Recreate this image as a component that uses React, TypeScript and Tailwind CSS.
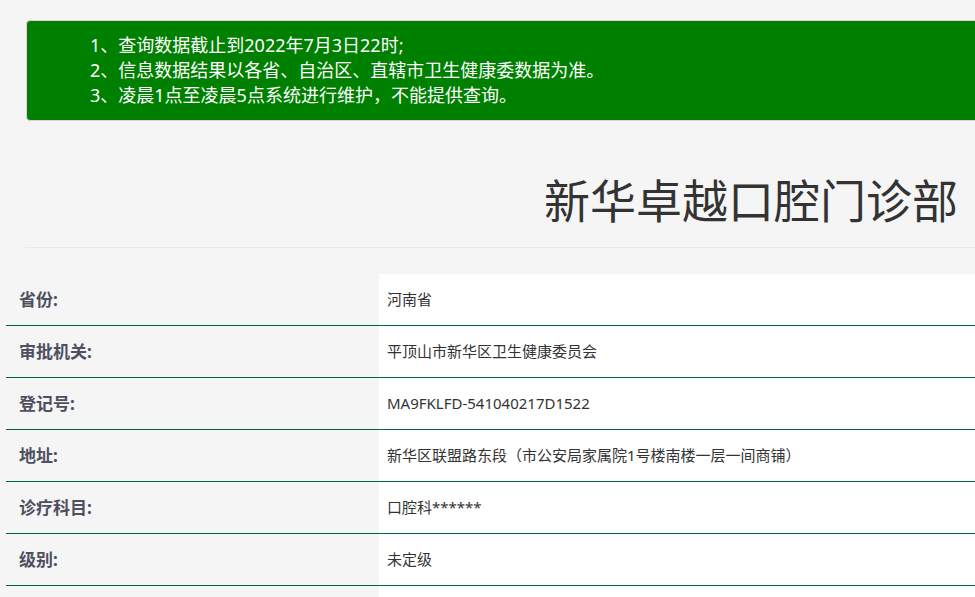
import React from "react";

const rows: [string, string][] = [
  ["省份:", "河南省"],
  ["审批机关:", "平顶山市新华区卫生健康委员会"],
  ["登记号:", "MA9FKLFD-541040217D1522"],
  ["地址:", "新华区联盟路东段（市公安局家属院1号楼南楼一层一间商铺）"],
  ["诊疗科目:", "口腔科******"],
  ["级别:", "未定级"],
  ["", ""],
];

export default function App() {
  return (
    <div
      className="w-[975px] h-[597px] overflow-hidden bg-[#f5f5f5]"
      style={{ fontFamily: '"Noto Sans", "Noto Sans CJK SC", sans-serif' }}
    >
      <div className="pt-5 pl-[26px]">
        <div className="w-[1000px] rounded border border-[#ebccd1] bg-[#008000] py-3 pl-[63px] text-[18px] leading-[25px] text-white">
          <p>1、查询数据截止到2022年7月3日22时;</p>
          <p>2、信息数据结果以各省、自治区、直辖市卫生健康委数据为准。</p>
          <p>3、凌晨1点至凌晨5点系统进行维护，不能提供查询。</p>
        </div>
      </div>

      <div className="pt-[54px] pr-[17px] text-right">
        <h1 className="text-[46px] leading-[50px] text-[#333]">新华卓越口腔门诊部</h1>
      </div>

      <div className="ml-[25px] mt-[22px] border-t border-[#e8e8e8]" />

      <div className="ml-[6px] mt-[26px] w-[1100px]">
        {rows.map(([label, value], i) => (
          <div key={i} className="flex h-[52px] border-b border-[#006633]">
            <div className="flex w-[373px] items-center pl-[13px] text-[17px] font-bold text-[#4f4f5f]">
              {label}
            </div>
            <div className="flex flex-1 items-center bg-white pl-[8px] text-[15px] text-[#333]">
              {value}
            </div>
          </div>
        ))}
      </div>
    </div>
  );
}
